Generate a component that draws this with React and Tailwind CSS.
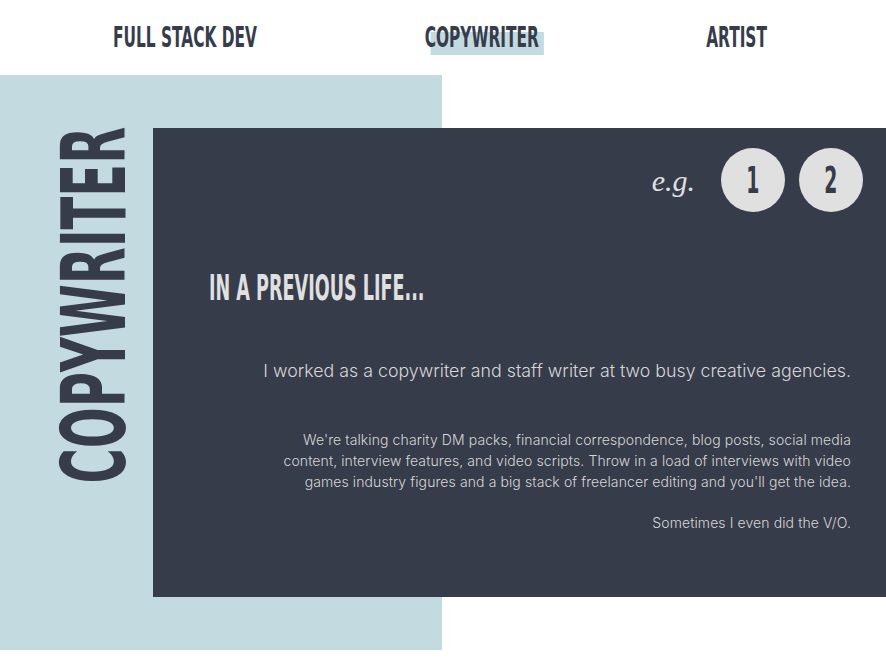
import React from 'react';

const cond = "font-['Liberation_Sans_Narrow','DejaVu_Sans_Condensed',sans-serif] font-bold";

function NavItem({ label, active, width }) {
  return (
    <div className={`${width} flex justify-center items-center`}>
      <span className="relative inline-block scale-x-[0.59]">
        {active && <span className="absolute left-[10px] right-[-8px] top-[9px] bottom-[-3px] bg-[#c3dae0]" />}
        <span className={`${cond} relative block text-[29px] leading-none text-[#363c4a]`}>{label}</span>
      </span>
    </div>
  );
}

export default function App() {
  return (
    <div className="w-[886px] h-[660px] bg-white overflow-hidden font-['Inter','Roboto',sans-serif]">
      {/* Top navigation */}
      <nav className="h-[75px] flex items-center">
        <NavItem label="FULL STACK DEV" width="w-[370px]" />
        <NavItem label="COPYWRITER" width="w-[224px]" active />
        <NavItem label="ARTIST" width="w-[286px]" />
      </nav>

      <div className="relative h-[585px]">
        {/* Light side panel with vertical title */}
        <div className="w-[442px] h-[575px] bg-[#c3dae0] pt-[52px]">
          <div className="w-[130px] h-[356px] flex flex-col items-center justify-center">
            <span className={`${cond} inline-block [writing-mode:vertical-rl] rotate-180 scale-y-[0.6] text-[89px] leading-none text-[#363c4a] ml-[59px]`}>
              COPYWRITER
            </span>
          </div>
        </div>

        {/* Dark card */}
        <div className="absolute left-[153px] top-[53px] w-[733px] h-[469px] bg-[#363c4a] flex flex-col">
          <div className="flex justify-end items-center gap-[14px] pt-[20px] pr-[23px]">
            <span className="font-['Liberation_Serif',serif] italic text-[30px] text-[#e0e0e0] mr-[12px]">e.g.</span>
            <div className="w-[64px] h-[64px] rounded-full bg-[#e0e0e0] flex items-center justify-center">
              <span className={`${cond} inline-block scale-x-[0.55] text-[38px] leading-none text-[#363c4a]`}>1</span>
            </div>
            <div className="w-[64px] h-[64px] rounded-full bg-[#e0e0e0] flex items-center justify-center">
              <span className={`${cond} inline-block scale-x-[0.55] text-[38px] leading-none text-[#363c4a]`}>2</span>
            </div>
          </div>

          <h2 className="pl-[56px] mt-[58px]">
            <span className={`${cond} inline-block origin-left scale-x-[0.543] text-[36px] leading-none text-[#e0e0e0]`}>IN A PREVIOUS LIFE...</span>
          </h2>

          <div className="pr-[35px] text-right font-light text-[#d6d6d6]">
            <p className="mt-[53px] text-[17.8px] leading-[24px]">
              I worked as a copywriter and staff writer at two busy creative agencies.
            </p>
            <p className="mt-[46px] ml-auto w-[570px] text-[14px] leading-[21px] tracking-[0.1px]">
              We're talking charity DM packs, financial correspondence, blog posts, social media content, interview features, and video scripts. Throw in a load of interviews with video games industry figures and a big stack of freelancer editing and you'll get the idea.
            </p>
            <p className="mt-[20px] text-[14px] leading-[21px] tracking-[0.1px]">Sometimes I even did the V/O.</p>
          </div>
        </div>
      </div>
    </div>
  );
}
